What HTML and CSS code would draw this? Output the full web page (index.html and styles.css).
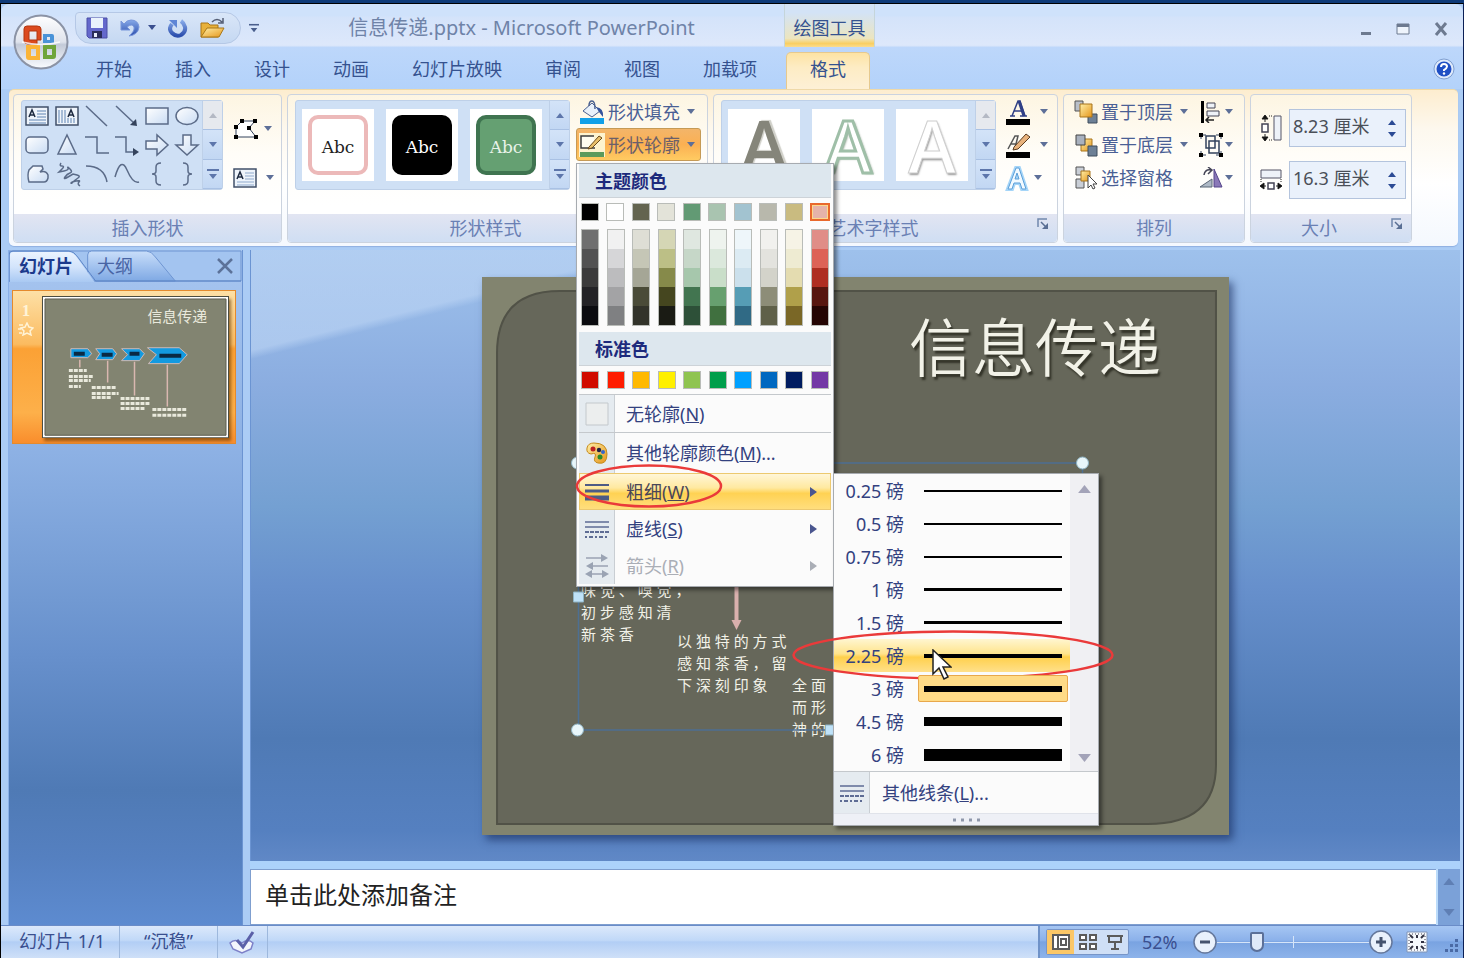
FILE: index.html
```html
<!DOCTYPE html>
<html lang="zh-CN">
<head>
<meta charset="utf-8">
<title>信息传递.pptx - Microsoft PowerPoint</title>
<link rel="stylesheet" href="styles.css">
</head>
<body>
<svg class="defs" aria-hidden="true">
  <defs>
    <symbol id="down" viewBox="0 0 8 5"><path d="M0 0h8L4 5z" fill="currentColor"/></symbol>
    <symbol id="up" viewBox="0 0 8 5"><path d="M0 5h8L4 0z" fill="currentColor"/></symbol>
    <symbol id="more" viewBox="0 0 12 10"><path d="M0 0h12v2H0zM2 5h8l-4 5z" fill="currentColor"/></symbol>
    <symbol id="right" viewBox="0 0 7 10"><path d="M0 0l7 5-7 5z" fill="currentColor"/></symbol>
    <symbol id="textbox" viewBox="0 0 24 20">
      <path d="M1 1h22v18H1z" fill="#eef4fb" stroke="#41506a" stroke-width="1.5"/>
      <path d="M12 5h9M12 8h9M12 11h9M4 14h17M4 17h17" stroke="#8fa9cc"/>
      <path d="M4 11l3-7 3 7M5 9h4" fill="none" stroke="#1d2a40" stroke-width="1.5"/>
    </symbol>
    <symbol id="launcher" viewBox="0 0 12 12"><path d="M1 9V1h9" fill="none" stroke="#7288ad" stroke-width="1.5"/><path d="M4 4l5 5" stroke="#5a6f94" stroke-width="1.5"/><path d="M11 5v6H5z" fill="#5a6f94"/></symbol>
    <symbol id="dashes" viewBox="0 0 24 18">
      <path d="M0 2h24M0 7h24" stroke="#5e6c94" stroke-width="1.5"/>
      <path d="M0 12h24" stroke="#5e6c94" stroke-width="2" stroke-dasharray="4 1"/>
      <path d="M0 17h24" stroke="#5e6c94" stroke-width="2" stroke-dasharray="2 2 4 2"/>
    </symbol>
    <linearGradient id="gold" x1="0" y1="0" x2="1" y2="1"><stop offset="0" stop-color="#fff0a8"/><stop offset="1" stop-color="#e5951a"/></linearGradient>
    <linearGradient id="orb" x1="0" y1="0" x2="0" y2="1"><stop offset="0" stop-color="#fff"/><stop offset=".5" stop-color="#dfe3ec"/><stop offset=".55" stop-color="#c3cad8"/><stop offset="1" stop-color="#fafcff"/></linearGradient>
    <linearGradient id="blue" x1="0" y1="0" x2="0" y2="1"><stop offset="0" stop-color="#86a9e8"/><stop offset="1" stop-color="#2c4fae"/></linearGradient>
    <linearGradient id="face" x1="0" y1="0" x2="1" y2="1"><stop offset="0" stop-color="#fff"/><stop offset="1" stop-color="#c9dcf4"/></linearGradient>
  </defs>
</svg>

<div class="window">
  <header class="titlebar">
    <button class="office" aria-label="Office 按钮">
      <svg viewBox="0 0 56 56">
        <circle cx="28" cy="28" r="26.500" fill="url(#orb)" stroke="#8b93a5" stroke-width="2"/>
        <path d="M14 12h10q4 0 4 3v11h-4v-9h-8v9h8v4h-9q-4 0-4-3V15q0-3 3-3z" fill="#dc4a1e" stroke="#b2360f"/>
        <path d="M30 27v-7h9q2 0 2 2v7H30v-3h7v-3h-3v4z" fill="#4a93d8"/>
        <path d="M13 31h14v15H16q-3 0-3-3zM18 35v7h5v-7z" fill="#fbb436" fill-rule="evenodd"/>
        <path d="M30 31h13v11q0 3-3 3H30zM34 35v6h5v-6z" fill="#6fa53a" fill-rule="evenodd"/>
        <path d="M9 28q19 5 38 0" fill="none" stroke="#fff" stroke-width="1.500" opacity=".8"/>
      </svg>
    </button>
    <div class="caption">
      <nav class="quick" aria-label="快速访问工具栏">
        <button aria-label="保存"><svg width="22" height="22" viewBox="0 0 22 22"><path d="M1 1h20v20H3l-2-2z" fill="#6468cc" stroke="#4a4ea6"/><path d="M5 1h12v10H5z" fill="#eaf2fc"/><path d="M6 14h10v7H6z" fill="#2a2d5c"/><path d="M8 16h3v4H8z" fill="#e8edfa"/></svg></button>
        <button aria-label="撤消"><svg width="20" height="20" viewBox="0 0 20 20"><path d="M1 3v9h9L7 9q5-4 7 0 1 4-5 9 9-1 10-9Q18 2 11 2 7 2 4 6z" fill="url(#blue)" stroke="#7795da"/></svg></button>
        <button class="slim" aria-label="撤消列表"><svg width="8" height="5"><use href="#down"/></svg></button>
        <button aria-label="重复"><svg width="20" height="20" viewBox="0 0 20 20"><path d="M4 6q-4 5 0 9t9 2q5-3 4-8-1-4-4-6" fill="none" stroke="url(#blue)" stroke-width="4"/><path d="M1 2h8v8z" fill="#5f86d6"/></svg></button>
        <button aria-label="打开"><svg width="26" height="22" viewBox="0 0 26 22"><path d="M1 6h7l2 2h8v12H1z" fill="#e8b13a" stroke="#a97717"/><path d="M1 20l6-9h17l-5 9z" fill="url(#gold)" stroke="#a97717"/><path d="M12 5q5-5 10 0M23 1v5h-5" fill="none" stroke="#555f75" stroke-width="1.500"/></svg></button>
      </nav>
      <button class="customize" aria-label="自定义快速访问工具栏"><svg width="10" height="10" viewBox="0 0 12 10"><use href="#more"/></svg></button>
      <h1 class="doc-title">信息传递.pptx - Microsoft PowerPoint</h1>
    </div>
    <div class="context">绘图工具</div>
    <div class="winbtns">
      <button aria-label="最小化"><svg width="12" height="14"><path d="M1 10h10v3H1z" fill="#6d7a90"/></svg></button>
      <button aria-label="最大化"><svg width="14" height="12"><path d="M1 1h12v10H1z" fill="#eef4fc" stroke="#6d7a90"/><path d="M1 1h12v3H1z" fill="#6d7a90"/></svg></button>
      <button aria-label="关闭"><svg width="14" height="14"><path d="M2 1l10 12M12 1L2 13" stroke="#6d7a90" stroke-width="3"/></svg></button>
    </div>
  </header>

  <nav class="tabs">
    <button>开始</button><button>插入</button><button>设计</button><button>动画</button><button>幻灯片放映</button><button>审阅</button><button>视图</button><button>加载项</button><button class="active">格式</button>
    <button class="help" aria-label="帮助"><svg width="22" height="22" viewBox="0 0 22 22"><circle cx="11" cy="11" r="10" fill="#dfeafb" stroke="#7f9fd0"/><circle cx="11" cy="11" r="7.500" fill="#1f4fc4"/><path d="M8 9q0-3 3-3t3 2.500q0 1.500-3 3.500v1" fill="none" stroke="#fff" stroke-width="2"/><circle cx="11" cy="15.500" r="1.200" fill="#fff"/></svg></button>
  </nav>

  <section class="ribbon">
    <div class="group g-insert">
      <div class="body">
        <div class="gallery">
          <div class="shapes">
            <button aria-label="文本框"><svg><use href="#textbox" width="24" height="20"/></svg></button>
            <button aria-label="竖排文本框"><svg viewBox="0 0 24 20"><path d="M1 1h22v18H1z" fill="#eef4fb" stroke="#41506a" stroke-width="1.500"/><path d="M4 4v13M7 4v13M10 4v13M13 12v5M16 12v5M19 12v5" stroke="#8fa9cc"/><path d="M13 11l3-7 3 7M14 9h4" fill="none" stroke="#1d2a40" stroke-width="1.500"/></svg></button>
            <button aria-label="直线"><svg viewBox="0 0 24 20"><path d="M1 0l21 20"/></svg></button>
            <button aria-label="箭头"><svg viewBox="0 0 24 20"><path d="M1 0l18 17"/><path d="M22 20l-7-1 6-6z" class="solid"/></svg></button>
            <button aria-label="矩形"><svg viewBox="0 0 24 20"><path d="M1 2h22v16H1z" class="face"/></svg></button>
            <button aria-label="椭圆"><svg viewBox="0 0 24 20"><ellipse cx="12" cy="10" rx="11" ry="8.500" class="face"/></svg></button>
            <button aria-label="圆角矩形"><svg viewBox="0 0 24 20"><rect x="1" y="2" width="22" height="16" rx="4" class="face"/></svg></button>
            <button aria-label="三角形"><svg viewBox="0 0 24 20"><path d="M12 0l9 19H3z" class="face"/></svg></button>
            <button aria-label="肘形连接符"><svg viewBox="0 0 24 20"><path d="M0 2h12v16h12"/></svg></button>
            <button aria-label="肘形箭头"><svg viewBox="0 0 24 20"><path d="M0 2h11v15h10"/><path d="M18 13l6 4-6 4z" class="solid"/></svg></button>
            <button aria-label="右箭头"><svg viewBox="0 0 24 20"><path d="M1 6h11V0l11 10-11 10v-6H1z" class="face"/></svg></button>
            <button aria-label="下箭头"><svg viewBox="0 0 24 20"><path d="M8 0h8v10h7L12 20 1 10h7z" class="face"/></svg></button>
            <button aria-label="任意多边形"><svg viewBox="0 0 24 20"><path d="M8 2h9l1 3-3 3q6-2 8 3v3q-1 4-4 4H4q-2-7 0-12z" class="face"/></svg></button>
            <button aria-label="自由曲线"><svg viewBox="0 0 24 20"><path d="M6-1q-2 3 1 3t0 3-3 3 5-1 4-3 2 1 0 4-5 4 3 0 5-3 4 1 1 3-5 4-2 1 5-2 3 1 1 4"/></svg></button>
            <button aria-label="弧形"><svg viewBox="0 0 24 20"><path d="M1 2q18 0 21 16"/></svg></button>
            <button aria-label="曲线"><svg viewBox="0 0 24 20"><path d="M0 13Q6-8 12 6t12 12"/></svg></button>
            <button aria-label="左大括号"><svg viewBox="0 0 24 20"><path d="M16-1q-5 0-5 4v4q0 3-4 3 4 0 4 3v4q0 4 5 4"/></svg></button>
            <button aria-label="右大括号"><svg viewBox="0 0 24 20"><path d="M8-1q5 0 5 4v4q0 3 4 3-4 0-4 3v4q0 4-5 4"/></svg></button>
          </div>
          <div class="scroller"><button class="off" aria-label="上一行"><svg><use href="#up"/></svg></button><button aria-label="下一行"><svg><use href="#down"/></svg></button><button aria-label="其他"><svg class="m"><use href="#more"/></svg></button></div>
        </div>
        <div class="stack spaced">
          <button class="ico" aria-label="编辑形状"><svg width="26" height="22" viewBox="0 0 26 22"><path d="M9 3h13l-6 7 7 9H3V9z" fill="#fff" stroke="#33425c"/><path d="M7 1h4v4H7zM20 1h4v4h-4zM1 7h4v4H1zM14 8h4v4h-4zM1 17h4v4H1zM21 17h4v4h-4z"/></svg><svg class="dd"><use href="#down"/></svg></button>
          <button class="ico wide" aria-label="文本框"><svg width="24" height="20"><use href="#textbox"/></svg><svg class="dd"><use href="#down"/></svg></button>
        </div>
      </div>
      <footer><span>插入形状</span></footer>
    </div>

    <div class="group g-style">
      <div class="body">
        <div class="gallery">
          <div class="tiles">
            <button class="tile"><span class="sample pink">Abc</span></button>
            <button class="tile"><span class="sample black">Abc</span></button>
            <button class="tile"><span class="sample green">Abc</span></button>
          </div>
          <div class="scroller"><button aria-label="上一行"><svg><use href="#up"/></svg></button><button aria-label="下一行"><svg><use href="#down"/></svg></button><button aria-label="其他"><svg class="m"><use href="#more"/></svg></button></div>
        </div>
        <div class="stack">
          <button class="cmd"><svg width="26" height="24" viewBox="0 0 26 24"><path d="M1 18h24v6H1z" fill="#12a0e8"/><path d="M4 11l9-8 8 8-8 6z" fill="#e8f0fa" stroke="#4b6190"/><path d="M10 6q0-5 3-5t3 8" fill="none" stroke="#4b6190" stroke-width="1.500"/><path d="M17 7q8 1 7 10l-4-5z" fill="#34539c"/></svg>形状填充<svg class="dd"><use href="#down"/></svg></button>
          <div class="dropdown">
            <button class="cmd pressed" aria-expanded="true"><svg width="26" height="24" viewBox="0 0 26 24"><path d="M0 0h26v24H0z" fill="#fdf3cf"/><path d="M1 19h24v5H1z" fill="#5c9a5c"/><path d="M15 3H2v12h14" fill="#fffdf0" stroke="#3c3c3c" stroke-width="1.500"/><path d="M10 14L20 3l3 2-10 10-4 1z" fill="#e9c06b" stroke="#6a4a1a"/></svg>形状轮廓<svg class="dd"><use href="#down"/></svg></button>
            <div class="menu">
              <h2>主题颜色</h2>
              <div class="swatches">
                <button style="background:#000"></button><button style="background:#fff"></button><button style="background:#63644f"></button><button style="background:#e3e3d9"></button><button style="background:#629a74"></button><button style="background:#a9c4b0"></button><button style="background:#a2c3d0"></button><button style="background:#b8b8ac"></button><button style="background:#c9bb80"></button><button class="chosen" style="background:#e5b3a9"></button>
              </div>
              <div class="shades">
                <div><button style="background:#6f6f6f"></button><button style="background:#525252"></button><button style="background:#3b3b3b"></button><button style="background:#232326"></button><button style="background:#0b0c10"></button></div>
                <div><button style="background:#f1f1f1"></button><button style="background:#d6d6d8"></button><button style="background:#bcbcbe"></button><button style="background:#a3a3a5"></button><button style="background:#7f8082"></button></div>
                <div><button style="background:#deded5"></button><button style="background:#c5c6b6"></button><button style="background:#a5a696"></button><button style="background:#4a4b38"></button><button style="background:#32332a"></button></div>
                <div><button style="background:#d5d6b5"></button><button style="background:#bcbf86"></button><button style="background:#868a4a"></button><button style="background:#45461f"></button><button style="background:#1a1b14"></button></div>
                <div><button style="background:#dfe7e0"></button><button style="background:#c6d7c8"></button><button style="background:#a6c7ac"></button><button style="background:#427550"></button><button style="background:#2d5038"></button></div>
                <div><button style="background:#eef3ee"></button><button style="background:#dbe8dc"></button><button style="background:#c9dec9"></button><button style="background:#67a06f"></button><button style="background:#40703f"></button></div>
                <div><button style="background:#eef6fa"></button><button style="background:#dcebf3"></button><button style="background:#cbe0ec"></button><button style="background:#569db5"></button><button style="background:#306a85"></button></div>
                <div><button style="background:#f1f1ee"></button><button style="background:#e3e3de"></button><button style="background:#d3d3ca"></button><button style="background:#8d8d78"></button><button style="background:#5f6049"></button></div>
                <div><button style="background:#f6f3e6"></button><button style="background:#eeebd2"></button><button style="background:#e4dcb0"></button><button style="background:#b0a04a"></button><button style="background:#7a6726"></button></div>
                <div><button style="background:#e08d87"></button><button style="background:#dd6257"></button><button style="background:#ae2e22"></button><button style="background:#57160f"></button><button style="background:#240503"></button></div>
              </div>
              <h2>标准色</h2>
              <div class="swatches">
                <button style="background:#d10c00"></button><button style="background:#ff1c00"></button><button style="background:#ffb900"></button><button style="background:#fff000"></button><button style="background:#8fc450"></button><button style="background:#009e4b"></button><button style="background:#00a0ff"></button><button style="background:#0068c0"></button><button style="background:#001c60"></button><button style="background:#7438a5"></button>
              </div>
              <ul class="items">
                <li class="ruled"><button><span class="gut"><svg width="24" height="24"><path d="M1 1h22v22H1z" fill="#eceeee" stroke="#c3c8cc"/></svg></span><span>无轮廓(<u>N</u>)</span></button></li>
                <li class="tall"><button><span class="gut"><svg width="22" height="22" viewBox="0 0 22 22"><path d="M8 1q13 0 13 11t-9 9q-5-1-3-6t-4-3q-5-1-4-6t7-5z" fill="url(#gold)" stroke="#c58a1c"/><circle cx="7" cy="7" r="2.500" fill="#b22"/><circle cx="13" cy="8" r="2.200" fill="#224"/><circle cx="17" cy="10" r="2" fill="#36c"/><circle cx="14" cy="15" r="2.500" fill="#2a8a2a"/></svg></span><span>其他轮廓颜色(<u>M</u>)...</span></button></li>
                <li class="hot"><button><span class="gut"><svg width="24" height="18"><path d="M0 2h24" stroke="#4d5b85" stroke-width="2"/><path d="M0 8h24" stroke="#4d5b85" stroke-width="3"/><path d="M0 15h24" stroke="#4d5b85" stroke-width="5"/></svg></span><span>粗细(<u>W</u>)</span><svg class="arrow"><use href="#right"/></svg></button>
                  <svg class="ring ring-weight" viewBox="0 0 148 44"><ellipse cx="74" cy="22" rx="72" ry="20.500"/></svg>
                  <div class="submenu">
                    <div class="weights">
                      <ul>
                        <li><button><span>0.25 磅</span><i style="height:2px"></i></button></li>
                        <li><button><span>0.5 磅</span><i style="height:2px"></i></button></li>
                        <li><button><span>0.75 磅</span><i style="height:2px"></i></button></li>
                        <li><button><span>1 磅</span><i style="height:3px"></i></button></li>
                        <li><button><span>1.5 磅</span><i style="height:3px"></i></button></li>
                        <li class="hot"><button><span>2.25 磅</span><i style="height:4px"></i></button>
                          <svg class="pointer" viewBox="0 0 20 32"><path d="M1 1v24l6-6 5 11 4-2-5-10h8z" fill="#fff" stroke="#222" stroke-width="1.500"/></svg>
                          <svg class="ring ring-value" viewBox="0 0 322 50"><ellipse cx="161" cy="25" rx="159.500" ry="23.500"/></svg>
                        </li>
                        <li class="current"><button><span>3 磅</span><b><i style="height:6px"></i></b></button></li>
                        <li><button><span>4.5 磅</span><i style="height:9px"></i></button></li>
                        <li><button><span>6 磅</span><i style="height:12px"></i></button></li>
                      </ul>
                      <div class="rail"><svg><use href="#up"/></svg><svg><use href="#down"/></svg></div>
                    </div>
                    <button class="more-lines"><span class="gut"><svg width="24" height="18"><use href="#dashes"/></svg></span><span>其他线条(<u>L</u>)...</span></button>
                    <div class="grip"><svg width="28" height="4"><path d="M1 2h27" stroke="#8f98ab" stroke-width="3" stroke-dasharray="3 5"/></svg></div>
                  </div>
                </li>
                <li><button><span class="gut"><svg width="24" height="18"><use href="#dashes"/></svg></span><span>虚线(<u>S</u>)</span><svg class="arrow"><use href="#right"/></svg></button></li>
                <li><button disabled><span class="gut"><svg width="24" height="24" viewBox="0 0 24 24"><path d="M1 4h20M3 12h20M3 20h18" stroke="#9aa3b3" stroke-width="1.500"/><path d="M16 0l7 4-7 4zM8 8l-7 4 7 4zM7 16l-7 4 7 4zM17 16l7 4-7 4z" fill="#9aa3b3"/></svg></span><span>箭头(<u>R</u>)</span><svg class="arrow"><use href="#right"/></svg></button></li>
              </ul>
            </div>
          </div>
        </div>
      </div>
      <footer><span>形状样式</span><button aria-label="设置形状格式"><svg width="12" height="12"><use href="#launcher"/></svg></button></footer>
    </div>

    <div class="group g-art">
      <div class="body">
        <div class="gallery">
          <div class="tiles">
            <button class="tile"><span class="wordart w1">A</span></button>
            <button class="tile"><span class="wordart w2">A</span></button>
            <button class="tile"><span class="wordart w3">A</span></button>
          </div>
          <div class="scroller"><button class="off" aria-label="上一行"><svg><use href="#up"/></svg></button><button aria-label="下一行"><svg><use href="#down"/></svg></button><button aria-label="其他"><svg class="m"><use href="#more"/></svg></button></div>
        </div>
        <div class="stack">
          <button class="ico wide" aria-label="文本填充"><svg width="26" height="26" viewBox="0 0 26 26"><path d="M1 20h24v6H1z"/><path d="M5 17h5M15 17h7M7 17L13 2h2l5 15M9 12h8" fill="none" stroke="#2f3f86" stroke-width="1.500"/><path d="M14 2l5 15" stroke="#2f3f86" stroke-width="3"/></svg><svg class="dd"><use href="#down"/></svg></button>
          <button class="ico wide" aria-label="文本轮廓"><svg width="26" height="26" viewBox="0 0 26 26"><path d="M1 20h24v6H1z"/><path d="M3 17L10 4h3l-3 12M6 12h5" fill="none" stroke="#555" stroke-width="1.500"/><path d="M9 15L21 2l4 3-12 12-5 1z" fill="#e8b27c" stroke="#5b3c20"/></svg><svg class="dd"><use href="#down"/></svg></button>
          <button class="ico" aria-label="文本效果"><svg width="24" height="26" viewBox="0 0 24 26"><path d="M3 24L11 3h3l7 21h-4l-2-6H9l-2 6zM10 14h4l-2-6z" fill="#fff" stroke="#a5d5f8" stroke-width="4" fill-rule="evenodd"/><path d="M3 24L11 3h3l7 21h-4l-2-6H9l-2 6zM10 14h4l-2-6z" fill="#f2faff" stroke="#5c9fd8" fill-rule="evenodd"/></svg><svg class="dd"><use href="#down"/></svg></button>
        </div>
      </div>
      <footer><span>艺术字样式</span><button aria-label="设置文本效果格式"><svg width="12" height="12"><use href="#launcher"/></svg></button></footer>
    </div>

    <div class="group g-arrange">
      <div class="body">
        <div class="stack">
          <button class="cmd"><svg width="24" height="24" viewBox="0 0 24 24"><path d="M1 1h8v10H1z" fill="#b9bfc9" stroke="#555"/><path d="M14 14h9v9h-9z" fill="#6d8096" stroke="#3f4c5c"/><path d="M6 4h12v13H6z" fill="url(#gold)" stroke="#a8741c"/></svg>置于顶层<svg class="dd"><use href="#down"/></svg></button>
          <button class="cmd"><svg width="24" height="24" viewBox="0 0 24 24"><path d="M7 6h11v12H7z" fill="url(#gold)" stroke="#a8741c"/><path d="M2 2h9v10H2z" fill="#a9b1be" stroke="#444"/><path d="M14 13h9v10h-9z" fill="#6d8096" stroke="#3f4c5c"/></svg>置于底层<svg class="dd"><use href="#down"/></svg></button>
          <button class="cmd"><svg width="24" height="24" viewBox="0 0 24 24"><path d="M2 1h8v8H2zM2 13h8v9H2z" fill="#c9ced6" stroke="#555"/><path d="M7 5h9v10H7z" fill="url(#gold)" stroke="#a8741c"/><path d="M14 9v13l3-3 2 4 2-1-2-4h4z" fill="#fff" stroke="#444"/></svg>选择窗格</button>
        </div>
        <div class="stack minor">
          <button class="ico" aria-label="对齐"><svg width="24" height="22" viewBox="0 0 24 22"><path d="M2 0h3v22H2z"/><path d="M8 2h8v5H8zM8 10h12v5H8z" fill="#eef2f8" stroke="#445"/><path d="M7 19h8M10 16l-3 3 3 3" stroke="#222" fill="none" stroke-width="1.500"/></svg><svg class="dd"><use href="#down"/></svg></button>
          <button class="ico" aria-label="组合"><svg width="24" height="24" viewBox="0 0 24 24"><path d="M7 3h9v12H7zM10 8h10v12H10z" fill="none" stroke="#33425c" stroke-width="1.500"/><path d="M2 2h5M17 2h5M2 22h5M17 22h5M2 2v4M22 2v4M2 18v4M22 18v4" stroke="#33425c"/><path d="M0 0h4v4H0zM20 0h4v4h-4zM0 20h4v4H0zM20 20h4v4h-4z"/></svg><svg class="dd"><use href="#down"/></svg></button>
          <button class="ico" aria-label="旋转"><svg width="24" height="22" viewBox="0 0 24 22"><path d="M1 20l12-8v8z" fill="#aeb9c6" stroke="#5b6676"/><path d="M15 2l8 18h-8z" fill="#8a78b8" stroke="#54458a"/><path d="M5 8q1-6 7-5M9 0l4 3-4 4" fill="none" stroke="#445" stroke-width="1.500"/></svg><svg class="dd"><use href="#down"/></svg></button>
        </div>
      </div>
      <footer><span>排列</span></footer>
    </div>

    <div class="group g-size">
      <div class="body">
        <label><svg width="22" height="28" viewBox="0 0 22 28"><path d="M14 2h7v24h-7z" fill="#eef2f8" stroke="#556"/><path d="M2 10h6v8H2z" fill="#fff" stroke="#445" stroke-width="1.500"/><path d="M5 3v5M5 20v5M2 5l3-4 3 4zM2 23l3 4 3-4z" stroke="#222"/><path d="M9 2h4M9 26h4" stroke="#222" stroke-dasharray="1 1"/></svg>
          <span class="spin"><input value="8.23 厘米" aria-label="形状高度"><span><svg><use href="#up"/></svg><svg><use href="#down"/></svg></span></span></label>
        <label><svg width="22" height="22" viewBox="0 0 22 22"><path d="M1 1h20v8H1z" fill="#eef2f8" stroke="#556"/><path d="M8 14h6v6H8z" fill="#fff" stroke="#445" stroke-width="1.500"/><path d="M2 17h4M16 17h4M4 14l-4 3 4 3zM18 14l4 3-4 3z" stroke="#222"/><path d="M1 10v4M21 10v4" stroke="#222" stroke-dasharray="1 1"/></svg>
          <span class="spin"><input value="16.3 厘米" aria-label="形状宽度"><span><svg><use href="#up"/></svg><svg><use href="#down"/></svg></span></span></label>
      </div>
      <footer><span>大小</span><button aria-label="大小和位置"><svg width="12" height="12"><use href="#launcher"/></svg></button></footer>
    </div>
  </section>

  <main class="workspace">
    <aside class="pane">
      <div class="pane-tabs">
        <svg class="tab-shapes" viewBox="0 0 234 32" preserveAspectRatio="none"><defs><linearGradient id="tabw" x1="0" y1="0" x2="0" y2="1"><stop offset="0" stop-color="#eaf3ff"/><stop offset=".5" stop-color="#d3e4fb"/><stop offset="1" stop-color="#a9c9f3"/></linearGradient><linearGradient id="tabb" x1="0" y1="0" x2="0" y2="1"><stop offset="0" stop-color="#c9defa"/><stop offset="1" stop-color="#7fa9e4"/></linearGradient></defs>
          <path d="M0 1h233v30H0z" fill="#a3c4f0" stroke="#6d95d2"/>
          <path d="M79 31V5q0-4 4-4h55q5 0 9 6l20 24z" fill="url(#tabb)" stroke="#6d95d2"/>
          <path d="M0 32V5q0-4 4-4h56q5 0 9 6l18 24h146" fill="none" stroke="#5c85c6"/>
          <path d="M1 32V5q0-3 3-3h56q4 0 8 5l18 25z" fill="url(#tabw)"/></svg>
        <button class="on">幻灯片</button><button>大纲</button>
        <button class="close" aria-label="关闭"><svg width="16" height="16"><path d="M1 1l14 14M15 1L1 15" stroke="#5c7299" stroke-width="2.500"/></svg></button>
      </div>
      <div class="thumb">
        <div class="num">1<svg width="16" height="14" viewBox="0 0 16 14"><path d="M9 1l2 4 4 1-3 3 1 4-4-2-4 2 1-4-3-3 4-1zM1 3h4M0 7h3M1 11h3" fill="none" stroke="#fff3d6" stroke-width="1.500"/></svg></div>
        <svg class="preview" viewBox="0 0 188 143">
          <path d="M0 0h188v143H0z" fill="#4c4d42"/><path d="M1 1h186v141H1z" fill="#fff"/><path d="M3 3h182v137H3z" fill="#828471" stroke="#5c5d50"/>
          <text x="106" y="26" font-size="15" fill="#e9e9dc">信息传递</text>
          <g fill="#139ae0" stroke="#d1b9b4"><path d="M29 53h17l4 5-4 4H29z"/><path d="M54 53h17l4 5-4 6H54l4-6z"/><path d="M80 53h18l5 5-5 7H80l6-6z"/><path d="M106 52h32l8 7-8 9h-31l8-9z"/></g>
          <path d="M32 58h11M60 59h11M88 58h10M118 60h22" stroke="#0a2a44" stroke-width="4"/>
          <path d="M38 64v8M66 65v22M93 66v34M126 69v42" stroke="#d9b7b0" stroke-width="1.500"/>
          <g stroke="#e9e9dc" stroke-width="3" stroke-dasharray="4 1"><path d="M27 75h18M27 81h24M27 85h22M27 91h12"/><path d="M50 92h25M50 98h27M50 102h20"/><path d="M79 103h29M79 108h30M79 113h25"/><path d="M111 114h35M111 120h35"/></g>
        </svg>
      </div>
    </aside>
    <div class="editor">
      <div class="canvas">
        <div class="slide">
          <svg class="slide-bg" viewBox="0 0 746 558" preserveAspectRatio="none"><path d="M0 0h746v558H0z" fill="#82846f"/><path d="M78 14h655v474q0 59-68 59H15V76q0-62 63-62z" fill="#66675a" stroke="#515247" stroke-width="2"/></svg>
          <div class="slide-title">信息传递</div>
          <p class="note n1">味 觉 、 嗅 觉 ，<br>初 步 感 知 清<br>新 茶 香</p>
          <p class="note n2">以 独 特 的 方 式<br>感 知 茶 香 ， 留<br>下 深 刻 印 象</p>
          <p class="note n3">全 面<br>而 形<br>神 的</p>
          <svg class="frame" viewBox="0 0 746 558"><path d="M96 186h504v267H96z" fill="none" stroke="#4d6f92" stroke-width="1.500"/><path d="M254 300v46" stroke="#d9b0ad" stroke-width="4"/><path d="M249 343h10l-5 10z" fill="#d9b0ad"/><g fill="#e8f6fa" stroke="#8fb4c4"><circle cx="95" cy="186" r="6"/><circle cx="600" cy="186" r="6"/><circle cx="95" cy="453" r="6"/><path d="M91 315h10v10H91zM343 448h10v10h-10z" fill="#bfe2f8"/></g></svg>
        </div>
      </div>
      <div class="notes">
        <textarea aria-label="备注">单击此处添加备注</textarea>
        <div class="vbar"><svg><use href="#up"/></svg><svg><use href="#down"/></svg></div>
      </div>
    </div>
  </main>

  <footer class="status">
    <div class="left">
      <span class="s1">幻灯片 1/1</span><span class="s2">“沉稳”</span>
      <button class="s3" aria-label="拼写检查"><svg width="26" height="24" viewBox="0 0 26 24"><path d="M1 13q5-5 12 0 6-5 11 0l-2 6-9 4-9-4z" fill="#f3f5fc" stroke="#7d80c8" stroke-width="1.500"/><path d="M8 10l6 7L24 2" fill="none" stroke="#5b60a8" stroke-width="3"/></svg></button>
    </div>
    <div class="right">
      <div class="views">
        <button class="on" aria-label="普通视图"><svg width="18" height="16"><path d="M1 1h16v14H1zM6 1v14M9 5h5v6H9z" fill="#fff" stroke="#5b5b5b" stroke-width="2"/></svg></button>
        <button aria-label="幻灯片浏览"><svg width="18" height="16"><path d="M1 1h6v5H1zM11 1h6v5h-6zM1 10h6v5H1zM11 10h6v5h-6z" fill="#fff" stroke="#5b5b5b" stroke-width="2"/></svg></button>
        <button aria-label="幻灯片放映"><svg width="18" height="16"><path d="M1 2h16M3 2v6h12V2M9 8v6M5 15h8" fill="none" stroke="#5b5b5b" stroke-width="2"/></svg></button>
      </div>
      <span class="pct">52%</span>
      <button class="zoom" aria-label="缩小"><svg width="24" height="24"><circle cx="12" cy="12" r="11" fill="#e9f1fc" stroke="#64779b" stroke-width="1.500"/><path d="M7 12h10" stroke="#45536e" stroke-width="3"/></svg></button>
      <input type="range" min="0" max="100" value="24" aria-label="显示比例">
      <button class="zoom" aria-label="放大"><svg width="24" height="24"><circle cx="12" cy="12" r="11" fill="#e9f1fc" stroke="#64779b" stroke-width="1.500"/><path d="M7 12h10M12 7v10" stroke="#45536e" stroke-width="3"/></svg></button>
      <button class="fit" aria-label="适应窗口"><svg width="22" height="22"><path d="M1 1h20v20H1z" fill="#f6f9fd" stroke="#8095b8"/><path d="M3 3h16v16H3z" fill="none" stroke="#445" stroke-dasharray="1 2"/><path d="M4 4l3 3M18 4l-3 3M4 18l3-3M18 18l-3-3M11 4v3M11 15v3M4 11h3M15 11h3" stroke="#334" stroke-width="2"/></svg></button>
      <svg class="resize" width="16" height="16"><path d="M12 1h3v3h-3zM7 6h3v3H7zM12 6h3v3h-3zM2 11h3v3H2zM7 11h3v3H7zM12 11h3v3h-3z" fill="#4a6aa5"/></svg>
    </div>
  </footer>
</div>
</body>
</html>
```
FILE: styles.css
```css
* { box-sizing: border-box; }
body {
  margin: 0;
  background: #06122c;
  border-top: 3px solid #0e3a78;
  font-family: "Noto Sans", "Noto Sans CJK SC", sans-serif;
  font-size: 18px;
  line-height: 24px;
  color: #3a4f8f;
}
button, input, textarea { font: inherit; color: inherit; }
button { border: 0; padding: 0; background: none; display: flex; align-items: center; text-align: left; white-space: nowrap; }
ul { list-style: none; margin: 0; padding: 0; }
svg { display: block; flex: none; }
.defs { position: absolute; width: 0; height: 0; }
.dd { width: 8px; height: 5px; color: #5d6f98; }

.window {
  display: flex;
  flex-direction: column;
  min-height: calc(100vh - 3px);
  padding: 0 3px 0 3px;
  border-top: 1px solid #000;
  border-left: 1px solid #000;
  border-right: 1px solid #0b1f55;
  background: #abccf5;
}

.titlebar {
  position: relative;
  display: flex;
  height: 43px;
  margin: 0 -3px;
  border-radius: 8px 8px 0 0;
  background: linear-gradient(#cfe2fb 0 28%, #d4e3fa 30%, #dde8fb 96%, #c4dbfa);
}
.office { position: absolute; left: 12px; top: 10px; width: 56px; height: 56px; z-index: 2; }
.office svg { width: 56px; height: 56px; }
.caption { display: flex; align-items: center; flex: 0 0 783px; padding-left: 74px; }
.quick {
  display: flex;
  align-items: center;
  gap: 12px;
  height: 32px;
  margin-top: 4px;
  padding: 0 14px 0 10px;
  border: 1px solid #b5c8e6;
  border-radius: 4px 16px 16px 16px;
  background: linear-gradient(#d9e6f8, #c5d8f2);
}
.quick .slim { margin-left: -4px; }
.customize { margin: 4px 0 0 8px; color: #4a5f8d; }
.doc-title { flex: 1; margin: 4px 0 0; font-size: 20px; font-weight: 400; text-align: center; color: #6f83a8; white-space: nowrap; }
.context {
  width: 91px;
  padding-top: 12px;
  text-align: center;
  color: #35528f;
  border-left: 1px solid #c5d5da;
  border-right: 1px solid #c5d5da;
  background: linear-gradient(#d3e3f6 20%, #ece5bf 80%, #f9cf62 92%, #fbdc8e);
}
.winbtns { display: flex; flex: 1; justify-content: flex-end; align-items: center; gap: 24px; padding: 6px 15px 0 0; }

.tabs { display: flex; align-items: flex-end; height: 42px; margin: 0 -3px; padding-left: 74px; background: linear-gradient(#bdd7fb, #b3d2fa); color: #35528f; }
.tabs button { height: 37px; padding: 0 21px 4px; margin-right: 1px; }
.tabs .active {
  padding: 0 23px 4px;
  margin: 0 0 0 7px;
  border: 1px solid #e6c98e;
  border-bottom: 0;
  border-radius: 5px 5px 0 0;
  background: linear-gradient(#fde3a4, #fdecc4 40%, #fdf0d6);
}
.tabs .help { margin: 0 8px 0 auto; padding: 0 0 4px; }

.ribbon {
  display: flex;
  gap: 5px;
  align-items: stretch;
  margin: 0 2px 0 5px;
  padding: 4px 4px 3px;
  border-top: 1px solid #efd9a8;
  border-radius: 5px;
  background: linear-gradient(#fdedcf, #fdf8ee 25%, #fff 60%, #f4f8fe);
  box-shadow: 0 1px 1px #8fb0e2;
}
.group { display: flex; flex-direction: column; border: 1px solid #cbd3df; border-radius: 4px; background: linear-gradient(#fdf5e2, #fffdf8 40%, #fff 75%); }
.group .body { display: flex; height: 119px; padding: 0 5px 0 7px; }
.group footer { display: flex; align-items: center; height: 28px; border-radius: 0 0 4px 4px; background: linear-gradient(#e2e5f2, #cfdef3); color: #6a80b4; }
.group footer span { flex: 1; text-align: center; }
.group footer button { width: 24px; padding: 0 0 8px 4px; }
.g-insert { width: 269px; }
.g-style { width: 421px; }
.g-art { width: 345px; }
.g-arrange { width: 182px; }
.g-size { width: 162px; }

.gallery { display: flex; height: 90px; margin-top: 5px; border: 1px solid #bed0e8; border-radius: 3px; background: #cfe0f5; }
.shapes { display: grid; grid-template-columns: repeat(6, 30px); grid-auto-rows: 29px; }
.shapes button { justify-content: center; }
.shapes svg { width: 24px; height: 20px; overflow: visible; fill: none; stroke: #5b6b88; stroke-width: 1.5; }
.shapes .solid { fill: #35435c; stroke: none; }
.shapes .face { fill: url(#face); }
.scroller { display: flex; flex-direction: column; width: 20px; border-left: 1px solid #bed0e8; }
.scroller button { flex: 1; justify-content: center; color: #5d76ab; background: linear-gradient(#d3e3f8, #c2d7f3); border-bottom: 1px solid #a9c1e4; }
.scroller .off { color: #b4b9c4; background: #e6e9ee; }
.scroller svg { width: 8px; height: 5px; }
.scroller .m { width: 12px; height: 10px; }
.tiles { display: flex; flex: 1; align-items: center; gap: 12px; padding-left: 6px; }
.g-style .gallery, .g-art .gallery { width: 275px; }
.tile { flex: none; justify-content: center; width: 72px; height: 72px; background: #fff; overflow: hidden; }
.sample { display: grid; place-items: center; width: 60px; height: 60px; border: 4px solid; border-radius: 10px; font: 17px/20px "DejaVu Serif", serif; padding-top: 4px; }
.pink { border-color: #ecb9b9; color: #222; background: #fff; }
.black { border-color: #000; color: #fff; background: #000; }
.green { border-color: #3f7450; color: #e9f3e9; background: #65a072; }
.wordart { font: 600 72px/72px "Open Sans", sans-serif; }
.w1 { color: #85857a; text-shadow: 2px -1px 1px #cfcfc8; }
.w2 { color: #fff; -webkit-text-stroke: 3px #9fbfa8; text-shadow: 2px 1px 2px #9a9; }
.w3 { color: #fff; -webkit-text-stroke: 1px #cfcfcf; text-shadow: 1px 2px 2px #999; }

.stack { display: flex; flex-direction: column; padding-left: 6px; }
.stack > * { height: 33px; }
.ico { gap: 5px; }
.ico.wide { gap: 9px; }
.stack.spaced { padding: 17px 0 0 10px; gap: 16px; }
.g-art .stack { padding-left: 9px; }
.cmd { gap: 3px; width: 125px; height: 33px; padding-left: 3px; color: #4a5f95; }
.cmd .dd { margin-left: 4px; }
.cmd.pressed { border: 1px solid #c59a55; border-radius: 3px; background: linear-gradient(#f3b56a, #fbb052 50%, #ffcb62); padding-left: 2px; color: #6b5f6a; }
.dropdown { position: relative; }
.g-arrange .body { padding: 0 0 0 5px; }
.g-arrange .stack { padding-left: 5px; }
.g-arrange .minor { padding-left: 7px; }
.g-arrange .minor .ico { gap: 2px; }
.g-arrange .cmd { width: 118px; padding-left: 0; }
.g-size .body { flex-direction: column; gap: 14px; padding: 14px 5px 0 9px; }
.g-size label { display: flex; align-items: center; gap: 7px; }
.spin { display: flex; flex: 1; height: 38px; border: 1px solid #b4c4dd; background: #eaf1fb; color: #4a4f58; }
.spin input { width: 88px; border: 0; padding: 0 0 4px 3px; background: none; outline: 0; }
.spin > span { display: flex; flex-direction: column; justify-content: space-around; align-items: center; flex: 1; padding: 6px 0; color: #2b4a94; }
.spin span svg { width: 8px; height: 5px; }

.menu, .submenu { position: absolute; background: #fbfbfb; border: 1px solid #a7abb0; box-shadow: 3px 3px 4px rgba(0, 0, 0, .45); color: #33417f; }
.menu { left: 0; top: 35px; width: 258px; z-index: 5; padding: 0 2px 2px; }
.menu h2 { margin: 0; height: 34px; padding: 0 18px 0 16px; font-size: 18px; line-height: 34px; color: #1d2a7c; background: #dde7ee; border-bottom: 1px solid #cdd3d8; }
.swatches, .shades { display: flex; justify-content: space-between; padding: 5px 2px; }
.swatches { height: 28px; }
.swatches button { width: 18px; height: 18px; border: 1px solid #b9bcb8; }
.swatches .chosen { width: 20px; margin-right: -1px; border: 2px solid #e9692c; box-shadow: inset 0 0 0 1px #fbd98c; }
.shades { padding: 3px 2px 6px; }
.shades div { width: 18px; border: 1px solid #b9bcb8; }
.shades button { width: 16px; height: 19px; }
.items { border-top: 1px solid #c4c8cc; }
.items > li { position: relative; height: 37px; }
.items > li.ruled { height: 38px; border-bottom: 1px solid #c4c8cc; }
.items > li.tall { height: 40px; }
.items > li > button { width: 100%; height: 100%; gap: 11px; padding-right: 14px; }
.items > li.hot > button { background: linear-gradient(#fff7dc, #ffe9a0 40%, #ffd253 55%, #ffdf80); box-shadow: inset 0 0 0 1px #ecc970; color: #4a4658; }
.gut { display: grid; place-items: center; width: 36px; height: 100%; background: #e5ebf0; border-right: 1px solid #c9ced3; }
.hot .gut { background: none; border-color: transparent; }
.submenu .gut { background: #e5ebf0; border-color: #c9ced3; }
.arrow { width: 7px; height: 10px; margin-left: auto; color: #4a568f; }
.items button:disabled, .items button:disabled .arrow { color: #aaaeb6; }
.submenu { left: 254px; top: 0; width: 266px; }
.weights { display: flex; border-bottom: 1px solid #c4c8cc; }
.weights ul { flex: none; width: 236px; }
.weights li { position: relative; height: 33px; }
.weights li > button { width: 100%; height: 33px; gap: 20px; }
.weights span { width: 70px; text-align: right; }
.weights i { display: block; width: 138px; background: #000; }
.weights .hot > button { background: linear-gradient(#fff6d0, #ffe48c 45%, #ffd04c 55%, #ffe08a); border-radius: 3px; }
.weights .current > button { gap: 14px; }
.weights b { display: grid; place-items: center; width: 150px; height: 27px; border: 1px solid #e8a84c; border-radius: 2px; background: #ffdb86; }
.rail { display: flex; flex-direction: column; justify-content: space-between; align-items: center; flex: 1; padding: 11px 0 9px; background: #f0f0f3; color: #a3a3b8; }
.rail svg { width: 13px; height: 8px; }
.more-lines { width: 100%; height: 41px; gap: 12px; }
.grip { display: grid; place-items: center; height: 12px; background: #eef0f6; border-top: 1px solid #e0e3ea; }
.ring { position: absolute; fill: none; stroke: #ea3a3a; stroke-width: 2.5; pointer-events: none; }
.ring-weight { left: -4px; top: -9px; width: 148px; height: 44px; z-index: 1; }
.ring-value { left: -42px; top: -9px; width: 322px; height: 50px; }
.pointer { position: absolute; left: 98px; top: 10px; width: 20px; height: 32px; z-index: 1; }

.workspace { display: flex; flex: 1; gap: 7px; margin-top: 4px; padding-left: 4px; }
.pane { width: 235px; flex: none; background: linear-gradient(#a8c6f0, #8db1e4 30%, #7199d2 52%, #6790cc 60%, #4f7ab5 80%, #5580c0 90%, #5d8bd0); border-left: 1px solid #8ab0e8; border-right: 1px solid #6b94d2; }
.pane-tabs { position: relative; display: flex; align-items: center; height: 32px; color: #4864a4; }
.tab-shapes { position: absolute; inset: 0; width: 100%; height: 100%; }
.pane-tabs button { position: relative; padding: 0 0 0 24px; }
.pane-tabs .on { padding-left: 10px; font-weight: 700; color: #1c3a8c; }
.pane-tabs .close { margin-left: auto; padding-right: 9px; }
.thumb { display: flex; gap: 6px; margin: 8px 6px 0 3px; padding: 5px 6px 5px 3px; border: 1px solid #e48a2d; background: linear-gradient(#fde0a6, #fbbb60 35%, #fba135 38%, #fdb04a 80%, #f98d2c); }
.num { display: flex; flex-direction: column; align-items: center; gap: 2px; width: 20px; padding-top: 6px; font: bold 17px/18px "Liberation Serif", serif; color: #fff3d6; }
.preview { flex: 1; min-width: 0; box-shadow: 2px 3px 3px rgba(90, 50, 0, .6); }

.editor { display: flex; flex-direction: column; flex: 1; min-width: 0; }
.canvas {
  display: grid;
  place-items: center;
  flex: 1;
  border-left: 1px solid #6b94d2;
  background:
    linear-gradient(166deg, rgba(190, 214, 245, .6) 11%, rgba(190, 214, 245, 0) 12%),
    linear-gradient(#9ec1ec, #8bade0 22%, #74a0d2 42%, #6790cc 55%, #4f7ab5 80%, #5580c0 95%, #6088c6);
}
.slide { position: relative; width: 747px; max-width: 92%; height: 558px; box-shadow: 4px 5px 8px rgba(20, 40, 90, .6); color: #f2f2e8; }
.slide-bg, .frame { position: absolute; inset: 0; width: 100%; height: 100%; }
.slide-title { position: absolute; right: 68px; top: 28px; font-size: 63px; line-height: 84px; font-weight: 350; text-shadow: 2px 3px 2px rgba(30, 30, 20, .7); }
.note { position: absolute; margin: 0; font-size: 15px; line-height: 22px; white-space: nowrap; }
.n1 { left: 99px; top: 302px; }
.n2 { left: 195px; top: 353px; }
.n3 { left: 310px; top: 397px; }
.notes { display: flex; height: 64px; border-top: 8px solid #acd2fb; }
.notes textarea { flex: 1; resize: none; border: 1px solid #7f9fcf; border-right: 0; padding: 11px 14px; outline: 0; font-size: 24px; line-height: 28px; color: #222; background: #fff; overflow: hidden; }
.vbar { display: flex; flex-direction: column; justify-content: space-between; align-items: center; width: 24px; padding: 9px 0; background: #7ba1d8; border-left: 2px solid #bcdcfb; color: #5f7fb4; }
.vbar svg { width: 12px; height: 7px; }

.status { display: flex; height: 33px; margin: 0 -3px; border-top: 1px solid #6a8cc8; background: linear-gradient(#dce9fb, #c0d8f8 45%, #b2cef5 50%, #cfe0f8); }
.left { display: flex; flex: 1; align-items: center; }
.left > * { height: 100%; line-height: 30px; border-right: 1px solid #9db8dd; }
.s1 { padding: 0 14px 0 18px; }
.s2 { width: 98px; text-align: center; }
.s3 { justify-content: center; width: 50px; }
.right { display: flex; align-items: center; flex: 0 0 425px; padding: 0 4px 0 6px; border-left: 2px solid #6f92c8; background: linear-gradient(#a6c6f3, #8bb1ea 45%, #79a3e1 50%, #8db3ea); }
.views { display: flex; border: 1px solid #7795c8; border-radius: 2px; background: #cfdff6; }
.views button { justify-content: center; width: 27px; height: 24px; }
.views .on { background: #fbc767; }
.pct { width: 64px; padding-left: 13px; }
.right input { width: 152px; height: 24px; margin: 0; appearance: none; background: linear-gradient(#d5e4f8, #d5e4f8) center / 100% 1px no-repeat, linear-gradient(#d5e4f8, #d5e4f8) 50% 50% / 1px 12px no-repeat; }
.right input::-webkit-slider-thumb { appearance: none; width: 14px; height: 20px; border: 2px solid #5b7099; background: #dfe9f8; border-radius: 2px 2px 7px 7px; }
.fit { margin-left: 13px; }
.resize { margin: 8px 0 0 auto; }
```
